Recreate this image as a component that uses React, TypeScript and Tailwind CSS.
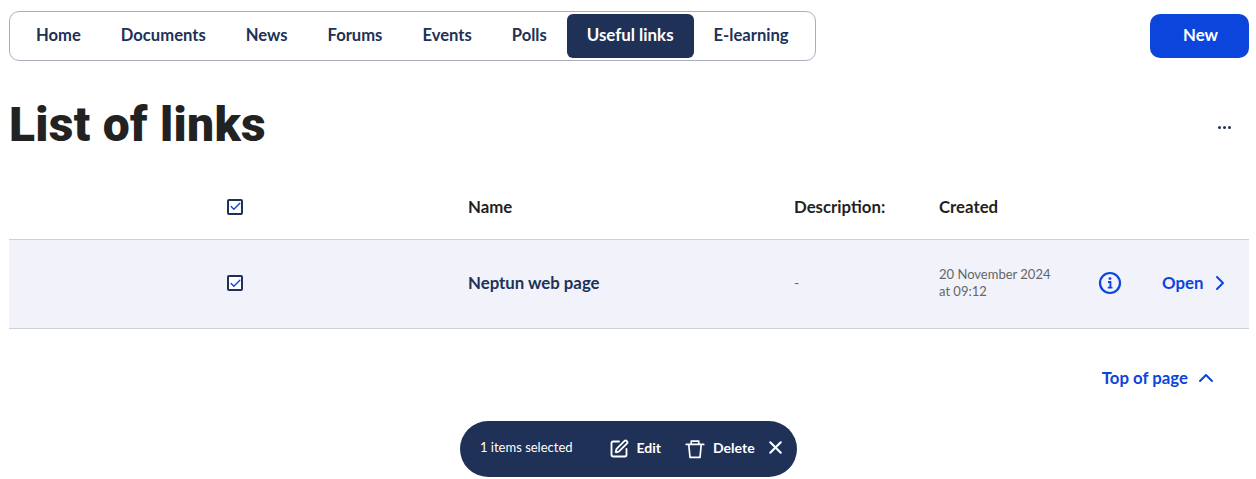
import { Check, ChevronRight, ChevronUp, SquarePen, X } from "lucide-react";

const tabs = ["Home", "Documents", "News", "Forums", "Events", "Polls", "Useful links", "E-learning"];

function CheckBox() {
  return (
    <span className="flex h-4 w-4 items-center justify-center rounded-[2px] border-2 border-[#203157] bg-white">
      <Check className="h-[13px] w-[13px] shrink-0 text-[#0b45dc]" strokeWidth={2.5} />
    </span>
  );
}

function InfoIcon() {
  return (
    <svg viewBox="0 0 24 24" className="h-6 w-6" fill="none" stroke="currentColor">
      <circle cx="12" cy="12" r="10" strokeWidth="2.2" />
      <circle cx="12" cy="7.6" r="1.4" fill="currentColor" stroke="none" />
      <path d="M10 11h2.4v5.4M9.8 16.6h4.6" strokeWidth="1.9" />
    </svg>
  );
}

function TrashIcon() {
  return (
    <svg viewBox="0 0 24 24" className="ml-6 h-5 w-5" fill="none" stroke="currentColor" strokeWidth="2" strokeLinejoin="round" strokeLinecap="round">
      <path d="M1.5 6.5h21M7.5 6.5V2.5h9v4M4.5 6.5l1.5 15.5h12l1.5-15.5" />
    </svg>
  );
}

export default function App() {
  return (
    <div className="h-[479px] overflow-hidden bg-white pl-[9px] pr-[7px] pt-[11px] font-['Lato',sans-serif] text-[#203157]">
      {/* Top bar */}
      <div className="flex items-start justify-between">
        <nav className="flex h-[50px] w-[807px] items-center rounded-[10px] border border-[#a9adc0] px-[6px]">
          {tabs.map((tab) => (
            <a
              key={tab}
              className={`flex h-11 items-center whitespace-nowrap rounded-md px-5 pb-[2px] font-bold ${
                tab === "Useful links" ? "bg-[#203157] text-[16.9px] text-white" : "text-[16.6px] text-[#203157]"
              }`}
            >
              {tab}
            </a>
          ))}
        </nav>
        <button className="mt-[3px] h-11 w-[99px] rounded-[10px] bg-[#0b45dc] pb-[2px] pl-[2px] text-[16.8px] font-bold text-white">New</button>
      </div>

      {/* Heading */}
      <div className="mt-[29px] flex h-[70px] items-center justify-between">
        <h1 className="font-['Roboto',sans-serif] text-[48px] font-black leading-[70px] tracking-[0.3px] text-[#222222]">List of links</h1>
        <span className="mr-[18px] mt-1 flex gap-[2px]">
          <i className="h-[3px] w-[3px] rounded-full bg-[#203157]" />
          <i className="h-[3px] w-[3px] rounded-full bg-[#203157]" />
          <i className="h-[3px] w-[3px] rounded-full bg-[#203157]" />
        </span>
      </div>

      {/* Table */}
      <div className="mt-[15px]">
        <div className="grid h-[65px] grid-cols-[459px_326px_145px_1fr] items-center border-b border-[#cfd0d4] pb-[1px] text-[16.8px] font-bold text-[#1f1f1f]">
          <div className="pl-[218px]">
            <CheckBox />
          </div>
          <div>Name</div>
          <div>Description:</div>
          <div>Created</div>
        </div>
        <div className="grid h-[89px] grid-cols-[459px_326px_145px_159px_1fr] items-center border-b border-[#cfd0d4] bg-[#f1f2fa] pb-[2px]">
          <div className="pl-[218px]">
            <CheckBox />
          </div>
          <div className="text-[16.8px] font-bold">Neptun web page</div>
          <div className="text-sm text-[#666666]">-</div>
          <div className="text-[13px] leading-[17px] text-[#666666]">
            20 November 2024
            <br />
            at 09:12
          </div>
          <div className="flex items-center text-[#0b45dc]">
            <InfoIcon />
            <span className="ml-10 text-[16.8px] font-bold">Open</span>
            <ChevronRight className="ml-[5px] h-6 w-6" strokeWidth={2} />
          </div>
        </div>
      </div>

      <div className="mt-[36px] flex items-center justify-end pr-[31px] text-[16.8px] font-bold text-[#0b45dc]">
        Top of page
        <ChevronUp className="ml-[6px] h-6 w-6" strokeWidth={2} />
      </div>

      {/* Selection bar */}
      <div className="mt-[31px] flex justify-center pr-[1px]">
        <div className="flex h-14 w-[337px] items-center rounded-[28px] bg-[#203157] pl-5 text-white">
          <span className="pb-[2px] text-[13px]">1 items selected</span>
          <SquarePen className="ml-9 h-5 w-5" strokeWidth={2.2} />
          <span className="ml-2 pb-[2px] text-sm font-bold">Edit</span>
          <TrashIcon />
          <span className="ml-2 pb-[2px] text-sm font-bold">Delete</span>
          <X className="mb-[3px] ml-[10px] h-[21px] w-[21px]" strokeWidth={2.4} />
        </div>
      </div>
    </div>
  );
}
